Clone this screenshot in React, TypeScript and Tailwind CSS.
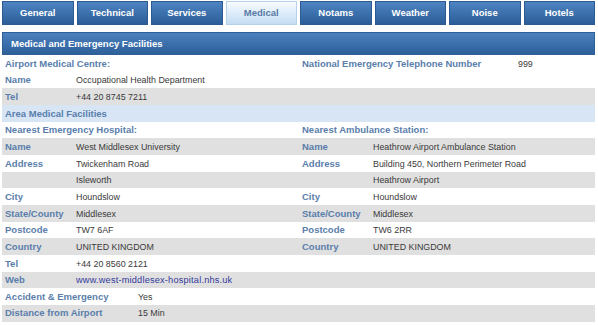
import React from "react";

const tabs = ["General", "Technical", "Services", "Medical", "Notams", "Weather", "Noise", "Hotels"];

type Cell = { l?: string; v?: string; link?: boolean; heading?: string };
type Row = { left: Cell; right?: Cell; bg?: "gray" | "blue" | "white"; full?: string; fullValue?: string };

const rows: Row[] = [
  { left: { heading: "Airport Medical Centre:" }, right: { heading: "National Emergency Telephone Number", v: "999" } },
  { left: { l: "Name", v: "Occupational Health Department" } },
  { left: { l: "Tel", v: "+44 20 8745 7211" }, bg: "gray" },
  { left: { heading: "Area Medical Facilities" }, bg: "blue" },
  { left: { heading: "Nearest Emergency Hospital:" }, right: { heading: "Nearest Ambulance Station:" } },
  { left: { l: "Name", v: "West Middlesex University" }, right: { l: "Name", v: "Heathrow Airport Ambulance Station" }, bg: "gray" },
  { left: { l: "Address", v: "Twickenham Road" }, right: { l: "Address", v: "Building 450, Northern Perimeter Road" } },
  { left: { l: "", v: "Isleworth" }, right: { l: "", v: "Heathrow Airport" }, bg: "gray" },
  { left: { l: "City", v: "Houndslow" }, right: { l: "City", v: "Houndslow" } },
  { left: { l: "State/County", v: "Middlesex" }, right: { l: "State/County", v: "Middlesex" }, bg: "gray" },
  { left: { l: "Postcode", v: "TW7 6AF" }, right: { l: "Postcode", v: "TW6 2RR" } },
  { left: { l: "Country", v: "UNITED KINGDOM" }, right: { l: "Country", v: "UNITED KINGDOM" }, bg: "gray" },
  { left: { l: "Tel", v: "+44 20 8560 2121" } },
  { left: { l: "Web", v: "www.west-middlesex-hospital.nhs.uk", link: true }, bg: "gray" },
  { left: {}, full: "Accident & Emergency", fullValue: "Yes" },
  { left: {}, full: "Distance from Airport", fullValue: "15 Min", bg: "gray" },
];

const labelCls = "font-bold text-[9.5px] text-[#5a7eab] whitespace-nowrap";
const valueCls = "text-[8.9px] text-[#3a3a3a] whitespace-nowrap";

function Half({ c }: { c?: Cell }) {
  if (!c) return <div />;
  if (c.heading !== undefined) {
    return (
      <div className="flex items-center h-full pl-[3px] pt-[1px]">
        <div className="flex items-baseline">
          <div className={`${labelCls} ${c.v ? "w-[216px]" : ""}`}>{c.heading}</div>
          {c.v && <div className={valueCls}>{c.v}</div>}
        </div>
      </div>
    );
  }
  if (c.l === undefined) return <div />;
  return (
    <div className="flex items-center h-full pl-[3px] pt-[1px]">
      <div className="flex items-baseline">
        <div className={`${labelCls} w-[71px]`}>{c.l || "\u00a0"}</div>
        {c.link ? (
          <div className="text-[9.2px] text-[#33399a] whitespace-nowrap tracking-[0.2px]">{c.v}</div>
        ) : (
          <div className={valueCls}>{c.v}</div>
        )}
      </div>
    </div>
  );
}

export default function App() {
  return (
    <div
      className="w-[598px] h-[325px] bg-white overflow-hidden pl-[2px] pr-[3px]"
      style={{ fontFamily: '"Liberation Sans", Arial, sans-serif' }}
    >
      <div className="grid grid-cols-8 gap-[3px] mt-[1px] h-[24px]">
        {tabs.map((t) =>
          t === "Medical" ? (
            <div
              key={t}
              className="flex items-center justify-center pt-[1px] border border-[#b4d0ea] bg-gradient-to-b from-[#f7fbff] to-[#c4ddf3] text-[9.5px] font-bold text-[#5a7aa5]"
            >
              {t}
            </div>
          ) : (
            <div
              key={t}
              className="flex items-center justify-center pt-[1px] border border-[#2b5b91] bg-gradient-to-b from-[#4d84c2] to-[#2c5e98] text-[9.5px] font-bold text-white"
            >
              {t}
            </div>
          )
        )}
      </div>
      <div className="mt-[7px] h-[23px] flex items-center pl-[8px] pt-[1px] border border-[#2e5e95] bg-gradient-to-b from-[#4b81bf] to-[#2e6099] text-[9.5px] font-bold text-white">
        Medical and Emergency Facilities
      </div>
      <div>
        {rows.map((r, i) => {
          const bg = r.bg === "gray" ? "bg-[#e0e0e0]" : r.bg === "blue" ? "bg-[#d7e5f5]" : "bg-white";
          if (r.full) {
            return (
              <div key={i} className={`h-[16.67px] flex items-center pl-[3px] pt-[1px] ${bg}`}>
                <div className="flex items-baseline">
                  <div className={`${labelCls} w-[133px]`}>{r.full}</div>
                  <div className={valueCls}>{r.fullValue}</div>
                </div>
              </div>
            );
          }
          return (
            <div key={i} className={`h-[16.67px] grid grid-cols-[297px_1fr] ${bg}`}>
              <Half c={r.left} />
              <Half c={r.right} />
            </div>
          );
        })}
      </div>
    </div>
  );
}
